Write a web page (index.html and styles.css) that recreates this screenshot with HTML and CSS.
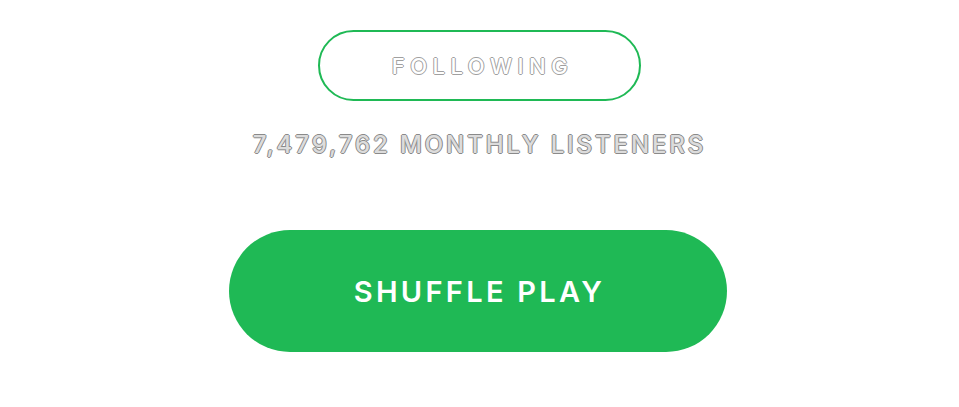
FILE: index.html
```html
<!DOCTYPE html>
<html>
<head>
<meta charset="utf-8">
<link rel="stylesheet" href="styles.css">
</head>
<body>
<main class="artist">
  <button class="follow-btn"><span class="follow-label">FOLLOWING</span></button>
  <div class="listeners">7,479,762 MONTHLY LISTENERS</div>
  <button class="shuffle-btn">SHUFFLE PLAY</button>
</main>
</body>
</html>
```
FILE: styles.css
```css
html, body {
  margin: 0;
  padding: 0;
  background: #ffffff;
}
.artist {
  width: 959px;
  height: 407px;
  display: flex;
  flex-direction: column;
  align-items: center;
  padding-top: 30px;
  box-sizing: border-box;
  font-family: "Inter", "Liberation Sans", sans-serif;
}
.follow-btn {
  width: 323px;
  height: 71px;
  box-sizing: border-box;
  border: 2px solid #1fb955;
  border-radius: 36px;
  background: #fff;
  display: flex;
  align-items: center;
  justify-content: center;
  padding: 0 0 0 6px;
  font-family: inherit;
}
.follow-label {
  font-size: 22px;
  line-height: 26px;
  font-weight: 500;
  letter-spacing: 5.5px;
  color: #ffffff;
  text-shadow: 1px 0 0 #a0a0a0, -1px 0 0 #a0a0a0, 0 1px 0 #a0a0a0, 0 -1px 0 #a0a0a0;
}
.listeners {
  margin-top: 29px;
  height: 30px;
  font-size: 24px;
  line-height: 30px;
  font-weight: 500;
  letter-spacing: 2.9px;
  color: #dcdcdc;
  text-shadow: 1px 0 0 #8a8a8a, -1px 0 0 #8a8a8a, 0 1px 0 #8a8a8a, 0 -1px 0 #8a8a8a;
}
.shuffle-btn {
  margin-top: 70px;
  margin-right: 3px;
  width: 498px;
  height: 122px;
  border: none;
  border-radius: 61px;
  background: #1fb955;
  color: #ffffff;
  font-family: inherit;
  font-size: 29px;
  font-weight: 600;
  letter-spacing: 3.3px;
  padding: 0 0 0 3px;
}
```
